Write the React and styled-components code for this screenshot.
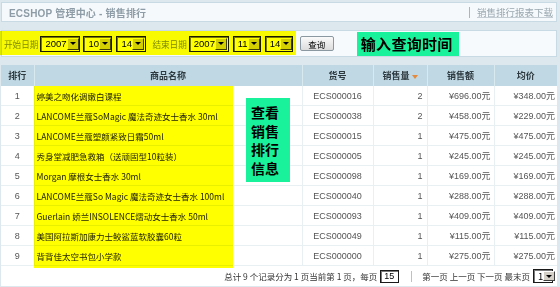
import React from 'react';
import styled, { createGlobalStyle } from 'styled-components';

const CJK = `"Liberation Sans Narrow", "Noto Sans CJK SC", sans-serif`;

const Global = createGlobalStyle`
  html, body { margin: 0; padding: 0; background: #dce8ee; }
  body {
    font-family: "Liberation Sans", "Noto Sans CJK SC", sans-serif;
    font-size: 9px;
    color: #333;
  }
`;

const Page = styled.div`
  position: relative;
  width: 560px;
  height: 287px;
  overflow: hidden;
  box-sizing: border-box;
  padding: 2px 3px 0 1px;
  display: flex;
  flex-direction: column;
  gap: 8px;
  & > * { flex: none; }
`;

const TitleBar = styled.div`
  height: 20px;
  box-sizing: border-box;
  background: #f5f9fb;
  border: 1px solid #c8dbe4;
  display: flex;
  align-items: center;
  justify-content: space-between;
  padding: 0 3px 0 7px;
`;

const Title = styled.h1`
  margin: 0;
  font-size: 10px;
  font-weight: bold;
  color: #8d9ca6;
  white-space: nowrap;
  letter-spacing: 0.2px;
`;

const ActionArea = styled.div`
  display: flex;
  align-items: center;
  gap: 7px;
  font-size: 9.5px;
  color: #9aa8b0;
`;

const Sep = styled.span`
  width: 1px;
  height: 11px;
  background: #a9b6bd;
`;

const ActionLink = styled.a`
  color: #9aa8b0;
  text-decoration: underline;
  text-decoration-color: #c2ccd2;
  cursor: pointer;
`;

const FilterBar = styled.div`
  height: 27px;
  box-sizing: border-box;
  background: #f7fafc;
  border: 1px solid #c8dbe4;
  display: flex;
  align-items: center;
  padding: 0 0 0 2px;
`;

const Label = styled.span`
  font-family: ${CJK};
  font-size: 8.6px;
  color: #7f8a90;
  margin-left: ${p => p.$ml || 0}px;
  margin-right: 2px;
  white-space: nowrap;
`;

const SelectBox = styled.span`
  display: inline-flex;
  align-items: stretch;
  width: ${p => p.$w}px;
  height: ${p => p.$h || 16}px;
  box-sizing: border-box;
  border: 1px solid #1a1a1a;
  box-shadow: inset 1px 1px 0 #7a7a7a;
  background: #fff;
  margin-right: ${p => p.$mr || 0}px;
  flex: none;
`;

const SelectValue = styled.span`
  flex: 1;
  display: flex;
  align-items: center;
  padding-left: 4px;
  font-size: 9.5px;
  color: #000;
`;

const SelectArrow = styled.span`
  width: 12px;
  flex: none;
  margin: 1px 1px 1px 0;
  box-sizing: border-box;
  background: #d4d0c8;
  border: 1px solid;
  border-color: #fff #404040 #404040 #fff;
  display: flex;
  align-items: center;
  justify-content: center;
  &::after {
    content: '';
    border-left: 3px solid transparent;
    border-right: 3px solid transparent;
    border-top: 3px solid #000;
  }
`;

const QueryButton = styled.button`
  margin-left: 7px;
  width: 34px;
  height: 15px;
  padding: 0;
  box-sizing: border-box;
  font-family: ${CJK};
  font-size: 8.5px;
  color: #000;
  background: linear-gradient(#fafafa, #dcdcdc);
  border: 1px solid #8a98a2;
  border-radius: 2px;
`;

const GreenNote = styled.div`
  margin-left: 23px;
  width: 102px;
  height: 24px;
  background: #19f29a;
  color: #000;
  font-family: "Noto Sans CJK SC", sans-serif;
  font-size: 15px;
  font-weight: 700;
  display: flex;
  align-items: center;
  padding-left: 4px;
  box-sizing: border-box;
  letter-spacing: 0.3px;
`;

const Table = styled.table`
  width: 556px;
  border-collapse: collapse;
  table-layout: fixed;
  background: #fff;
`;

const Th = styled.th`
  height: 21px;
  padding: 0;
  background: #bfd8e3;
  border-left: 1px solid #d9e9f0;
  font-family: ${CJK};
  font-size: 9px;
  font-weight: bold;
  color: #2f3a40;
  text-align: center;
  &:first-child { border-left: none; }
`;

const SortMark = styled.span`
  display: inline-block;
  margin-left: 2px;
  vertical-align: middle;
  border-left: 3px solid transparent;
  border-right: 3px solid transparent;
  border-top: 4px solid #e58a3c;
`;

const Td = styled.td`
  height: 19px;
  padding: 0 ${p => p.$pr || 0}px 0 ${p => p.$pl || 0}px;
  border-left: 1px solid #e8f0f4;
  border-bottom: 1px solid #e8f0f4;
  text-align: ${p => p.$align || 'left'};
  color: #555;
  white-space: nowrap;
  overflow: hidden;
  &:first-child { border-left: none; }
`;

const NameTd = styled(Td)`
  font-family: ${CJK};
  font-size: 8.5px;
  color: #222;
`;

const FooterCell = styled.td`
  height: 20px;
  padding: 0 4px 0 0;
  white-space: nowrap;
  color: #333;
`;

const FooterInner = styled.div`
  display: flex;
  align-items: center;
  justify-content: flex-end;
  gap: 3px;
  font-family: ${CJK};
  font-size: 8.5px;
`;

const PageInput = styled.span`
  width: 19px;
  height: 13px;
  box-sizing: border-box;
  border: 1px solid #1a1a1a;
  box-shadow: inset 1px 1px 0 #7a7a7a;
  font-family: "Liberation Sans", sans-serif;
  font-size: 9px;
  color: #000;
  padding-left: 3px;
  display: flex;
  align-items: center;
  background: #fff;
`;

const FootSep = styled.span`
  width: 1px;
  height: 11px;
  background: #b8c3c9;
  margin: 0 7px 0 9px;
`;

const Highlight = styled.div`
  position: absolute;
  left: ${p => p.$x}px;
  top: ${p => p.$y}px;
  width: ${p => p.$w}px;
  height: ${p => p.$h}px;
  background: #ffff00;
  mix-blend-mode: multiply;
  pointer-events: none;
`;

const GreenBox = styled.div`
  position: absolute;
  left: 246px;
  top: 98px;
  width: 44px;
  height: 84px;
  background: #19f29a;
  color: #000;
  font-family: "Noto Sans CJK SC", sans-serif;
  font-size: 14px;
  font-weight: 700;
  line-height: 18.5px;
  padding: 5px 0 0 5px;
  box-sizing: border-box;
`;

const rows = [
  ['1', '婷美之吻化调嫩白课程', 'ECS000016', '2', '¥696.00元', '¥348.00元'],
  ['2', 'LANCOME兰蔻SoMagic 魔法奇迹女士香水 30ml', 'ECS000038', '2', '¥458.00元', '¥229.00元'],
  ['3', 'LANCOME兰蔻塑颜紧致日霜50ml', 'ECS000015', '1', '¥475.00元', '¥475.00元'],
  ['4', '秀身堂减肥急救箱（送顽固型10粒装）', 'ECS000005', '1', '¥245.00元', '¥245.00元'],
  ['5', 'Morgan 摩根女士香水 30ml', 'ECS000098', '1', '¥169.00元', '¥169.00元'],
  ['6', 'LANCOME兰蔻So Magic 魔法奇迹女士香水 100ml', 'ECS000040', '1', '¥288.00元', '¥288.00元'],
  ['7', 'Guerlain 娇兰INSOLENCE熠动女士香水 50ml', 'ECS000093', '1', '¥409.00元', '¥409.00元'],
  ['8', '美国阿拉斯加康力士鲛鲨蓝软胶囊60粒', 'ECS000049', '1', '¥115.00元', '¥115.00元'],
  ['9', '背背佳太空书包小学款', 'ECS000000', '1', '¥275.00元', '¥275.00元'],
];

function FakeSelect({ w, h, value, mr }) {
  return (
    <SelectBox $w={w} $h={h} $mr={mr}>
      <SelectValue>{value}</SelectValue>
      <SelectArrow />
    </SelectBox>
  );
}

export default function App() {
  return (
    <>
      <Global />
      <Page>
        <TitleBar>
          <Title>ECSHOP 管理中心 - 销售排行</Title>
          <ActionArea>
            <Sep />
            <ActionLink>销售排行报表下载</ActionLink>
          </ActionArea>
        </TitleBar>

        <FilterBar>
          <Label>开始日期</Label>
          <FakeSelect w={40} value="2007" mr={3} />
          <FakeSelect w={29} value="10" mr={4} />
          <FakeSelect w={30} value="14" />
          <Label $ml={6}>结束日期</Label>
          <FakeSelect w={40} value="2007" mr={4} />
          <FakeSelect w={28} value="11" mr={4} />
          <FakeSelect w={28} value="14" />
          <QueryButton>查询</QueryButton>
          <GreenNote>输入查询时间</GreenNote>
        </FilterBar>

        <Table>
          <colgroup>
            <col style={{ width: 33 }} />
            <col style={{ width: 268 }} />
            <col style={{ width: 71 }} />
            <col style={{ width: 54 }} />
            <col style={{ width: 67 }} />
            <col style={{ width: 63 }} />
          </colgroup>
          <thead>
            <tr>
              <Th>排行</Th>
              <Th>商品名称</Th>
              <Th>货号</Th>
              <Th>销售量<SortMark /></Th>
              <Th>销售额</Th>
              <Th>均价</Th>
            </tr>
          </thead>
          <tbody>
            {rows.map(r => (
              <tr key={r[0]}>
                <Td $align="center">{r[0]}</Td>
                <NameTd $pl={2}>{r[1]}</NameTd>
                <Td $align="center">{r[2]}</Td>
                <Td $align="right" $pr={4}>{r[3]}</Td>
                <Td $align="right" $pr={3}>{r[4]}</Td>
                <Td $align="right" $pr={2}>{r[5]}</Td>
              </tr>
            ))}
            <tr>
              <FooterCell colSpan={6}>
                <FooterInner>
                  <span>总计 9 个记录分为 1 页当前第 1 页，每页</span>
                  <PageInput>15</PageInput>
                  <FootSep />
                  <span>第一页 上一页 下一页 最末页</span>
                  <FakeSelect w={20} h={14} value="1" />
                </FooterInner>
              </FooterCell>
            </tr>
          </tbody>
        </Table>

        <Highlight $x={0} $y={31} $w={296} $h={24} />
        <Highlight $x={34} $y={86} $w={199} $h={182} />
        <GreenBox>查看<br />销售<br />排行<br />信息</GreenBox>
      </Page>
    </>
  );
}
